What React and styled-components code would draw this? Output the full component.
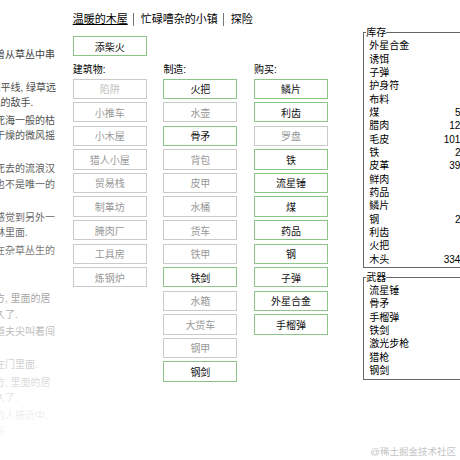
import React from "react";
import styled, { createGlobalStyle } from "styled-components";

const notices = [
  ["一头巨大的野兽从草丛中串", "出来."],
  ["树林消失, 在地平线, 绿草远", "不是沙尘, 狂风的敌手."],
  ["前方是一片如死海一般的枯", "萎黄的草地在干燥的微风摇", "曳着."],
  ["地上躺着一个死去的流浪汉", "而且这个家伙也不是唯一的", "一个."],
  ["你隐隐约约地感觉到另外一", "些东西藏在树林里面."],
  ["一座废弃小屋在杂草丛生的", "空地上, 门口", "积满了灰."],
  ["这是个破败地方, 里面的居", "民已经离开很久了."],
  ["衣衫褴褛的人道夫尖叫着闯", "了进来."],
  ["一个陌生人站在门里面."],
  ["这是个破败地方, 里面的居", "民已经离开很久了."],
  ["远处一群陌生的人接近中,", "他们正在缓慢穿"],
];

const buildings = [
  { name: "陷阱", faint: true },
  { name: "小推车" },
  { name: "小木屋" },
  { name: "猎人小屋" },
  { name: "贸易栈" },
  { name: "制革坊" },
  { name: "腌肉厂" },
  { name: "工具房" },
  { name: "炼钢炉" },
];

const crafts = [
  { name: "火把", on: true },
  { name: "水壶" },
  { name: "骨矛", on: true },
  { name: "背包" },
  { name: "皮甲" },
  { name: "水桶" },
  { name: "货车" },
  { name: "铁甲" },
  { name: "铁剑", on: true },
  { name: "水箱" },
  { name: "大货车" },
  { name: "钢甲" },
  { name: "钢剑", on: true },
];

const buys = [
  { name: "鳞片", on: true },
  { name: "利齿", on: true },
  { name: "罗盘" },
  { name: "铁", on: true },
  { name: "流星锤", on: true },
  { name: "煤", on: true },
  { name: "药品", on: true },
  { name: "钢", on: true },
  { name: "子弹", on: true },
  { name: "外星合金", on: true },
  { name: "手榴弹", on: true },
];

const stores = [
  ["外星合金", 1],
  ["诱饵", 3],
  ["子弹", 8],
  ["护身符", 1],
  ["布料", 6],
  ["煤", 54],
  ["腊肉", 127],
  ["毛皮", 1013],
  ["铁", 25],
  ["皮革", 392],
  ["鲜肉", 4],
  ["药品", 7],
  ["鳞片", 2],
  ["钢", 21],
  ["利齿", 9],
  ["火把", 5],
  ["木头", 3342],
];

const weapons = [
  ["流星锤", 1],
  ["骨矛", 2],
  ["手榴弹", 3],
  ["铁剑", 1],
  ["激光步枪", 1],
  ["猎枪", 1],
  ["钢剑", 1],
];

const App = () => {
  return (
    <Page>
      <GlobalStyle />
      <NotifyColumn>
        {notices.map((lines, i) => (
          <Notice key={i}>
            {lines.map((l, j) => (
              <React.Fragment key={j}>
                {j > 0 && <br />}
                {l}
              </React.Fragment>
            ))}
          </Notice>
        ))}
        <Fade />
      </NotifyColumn>

      <Main>
        <Tabs>
          <Tab $active>温暖的木屋</Tab>
          <Tab>忙碌嘈杂的小镇</Tab>
          <Tab>探险</Tab>
        </Tabs>

        <Panel>
          <Controls>
            <Button>添柴火</Button>
            <Columns>
              <Column>
                <Label>建筑物:</Label>
                {buildings.map((b) => (
                  <Button key={b.name} $off $faint={b.faint}>
                    {b.name}
                  </Button>
                ))}
              </Column>
              <Column>
                <Label>制造:</Label>
                {crafts.map((c) => (
                  <Button key={c.name} $off={!c.on}>
                    {c.name}
                  </Button>
                ))}
              </Column>
              <Column>
                <Label>购买:</Label>
                {buys.map((c) => (
                  <Button key={c.name} $off={!c.on}>
                    {c.name}
                  </Button>
                ))}
              </Column>
            </Columns>
          </Controls>

          <Stores>
            <Store>
              <Legend>库存</Legend>
              {stores.map(([name, n]) => (
                <Row key={name}>
                  <span>{name}</span>
                  <Count>{n}</Count>
                </Row>
              ))}
            </Store>
            <Store>
              <Legend>武器</Legend>
              {weapons.map(([name, n]) => (
                <Row key={name}>
                  <span>{name}</span>
                  <Count>{n}</Count>
                </Row>
              ))}
            </Store>
          </Stores>
        </Panel>
      </Main>

      <Watermark>@稀土掘金技术社区</Watermark>
    </Page>
  );
};

export default App;

const GlobalStyle = createGlobalStyle`
  html, body {
    margin: 0;
    padding: 0;
    overflow: hidden;
    background: #fff;
  }

  body {
    font-family: "Liberation Sans", "Noto Sans CJK SC", sans-serif;
    font-size: 10px;
    color: #000;
  }
`;

const Page = styled.div`
  position: relative;
  display: flex;
  align-items: flex-start;
  width: 460px;
  height: 460px;
  overflow: hidden;
`;

// 通知栏左半截在窗口外, 只露出每行的结尾
const NotifyColumn = styled.div`
  position: relative;
  flex: none;
  box-sizing: border-box;
  width: 121px;
  height: 460px;
  margin-left: -65px;
  padding-top: 46.5px;
  overflow: hidden;
`;

const Notice = styled.div`
  margin-bottom: 2px;
  line-height: 15.5px;
  white-space: nowrap;
  color: #222;
`;

const Fade = styled.div`
  position: absolute;
  inset: 0;
  pointer-events: none;
  background: linear-gradient(
    to bottom,
    rgba(255, 255, 255, 0.12) 40px,
    rgba(255, 255, 255, 0.35) 240px,
    rgba(255, 255, 255, 0.6) 300px,
    rgba(255, 255, 255, 0.8) 370px,
    rgba(255, 255, 255, 0.92) 415px,
    rgba(255, 255, 255, 0.97) 440px
  );
`;

const Main = styled.div`
  flex: 1;
  margin-left: 16.7px;
  padding-top: 12.7px;
`;

const Tabs = styled.div`
  display: flex;
  height: 13.3px;
  line-height: 13.3px;
  font-size: 11px;
`;

const Tab = styled.span`
  padding: 0 5px 0 7px;
  border-left: 1px solid #777;
  text-decoration: ${(p) => (p.$active ? "underline" : "none")};
  cursor: pointer;

  &:first-child {
    padding-left: 0;
    border-left: none;
  }
`;

const Panel = styled.div`
  display: flex;
  align-items: flex-start;
`;

const Controls = styled.div`
  flex: none;
  width: 256px;
  padding-top: 10px;
`;

const Columns = styled.div`
  display: flex;
  gap: 16.7px;
  margin-top: 7px;
`;

const Column = styled.div`
  display: flex;
  flex-direction: column;
  width: 74px;
`;

const Label = styled.div`
  line-height: 13.3px;
  margin-bottom: 2px;
`;

const Button = styled.div`
  box-sizing: border-box;
  width: 74px;
  height: 20.3px;
  margin-bottom: 3.28px;
  display: flex;
  align-items: center;
  justify-content: center;
  border: 1px solid ${(p) => (p.$off ? "#cacaca" : "#8cc587")};
  color: ${(p) => (p.$faint ? "#c2c2c2" : p.$off ? "#999" : "#111")};
  cursor: pointer;
  user-select: none;
`;

const Stores = styled.div`
  flex: none;
  width: 109px;
  margin-left: 34px;
`;

const Store = styled.fieldset`
  box-sizing: border-box;
  width: 109px;
  min-width: 0;
  margin: 0 0 2.5px;
  padding: 0 4.7px 1.5px 5.6px;
  border: 1px solid #666;
`;

const Legend = styled.legend`
  padding: 0;
  margin-left: -3px;
  line-height: 13.3px;
`;

const Row = styled.div`
  display: flex;
  justify-content: space-between;
  height: 13.33px;
  line-height: 13.33px;
  white-space: nowrap;
`;

const Count = styled.span`
  text-align: right;
`;

const Watermark = styled.div`
  position: absolute;
  right: 4px;
  bottom: 2px;
  line-height: 12px;
  font-size: 9.5px;
  color: #c4c4c4;
  pointer-events: none;
`;
